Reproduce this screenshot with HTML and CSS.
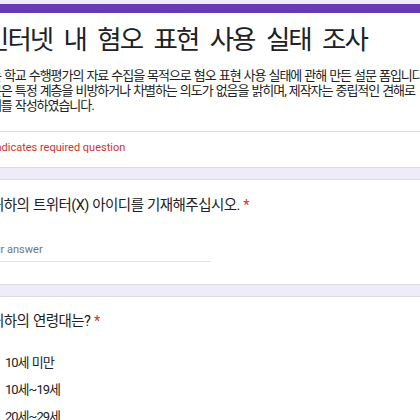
FILE: index.html
```html
<!DOCTYPE html>
<html lang="ko">
<head>
  <meta charset="UTF-8">
  <meta name="viewport" content="width=device-width, initial-scale=1">
  <title>인터넷 내 혐오 표현 사용 실태 조사</title>
  <link rel="stylesheet" href="styles.css">
</head>
<body>

<div class="form-page">

    <div class="card card-header">
        <div class="header-main">
            <h1 class="form-title">인터넷 내 혐오 표현 사용 실태 조사</h1>
            <p class="form-desc">이는 학교 수행평가의 자료 수집을 목적으로 혐오 표현 사용 실태에 관해 만든 설문 폼입니다.<br>설문은 특정 계층을 비방하거나 차별하는 의도가 없음을 밝히며, 제작자는 중립적인 견해로<br>문제를 작성하였습니다.</p>
        </div>
        <div class="required-note">* Indicates required question</div>
    </div>

    <div class="card question">
        <div class="q-title">귀하의 트위터(X) 아이디를 기재해주십시오. <span class="star">*</span></div>
        <div class="text-answer">Your answer</div>
    </div>

    <div class="card question">
        <div class="q-title">귀하의 연령대는? <span class="star">*</span></div>
        <div class="options">
            <div class="option"><span class="radio"></span>10세 미만</div>
            <div class="option"><span class="radio"></span>10세~19세</div>
            <div class="option"><span class="radio"></span>20세~29세</div>
            <div class="option"><span class="radio"></span>30세~39세</div>
        </div>
    </div>

</div>

</body>
</html>
```

FILE: styles.css
```css
:root {
    --bg-color: #f0ebf8;
    --accent: #673ab7;
    --border: #dadce0;
    --text: #202124;
    --muted: #70757a;
    --red: #d93025;
}

* {
    margin: 0;
    padding: 0;
    box-sizing: border-box;
}

body {
    font-family: Roboto, "Noto Sans CJK KR", sans-serif;
    background: var(--bg-color);
    color: var(--text);
    overflow: hidden;
}

.form-page {
    width: 560px;
    margin-left: -40px;
    padding-top: 4px;
}

.card {
    background: #fff;
    border: 1px solid var(--border);
    border-radius: 8px;
    margin-bottom: 11px;
    padding-left: 24px;
}

.card-header {
    border-top: 9px solid var(--accent);
    padding-left: 0;
}

.header-main {
    padding: 9px 0 18px 24px;
    border-bottom: 1px solid var(--border);
}

.form-title {
    font-family: "Noto Sans CJK KR", sans-serif;
    font-weight: 400;
    font-size: 26.5px;
    line-height: 31px;
    letter-spacing: -2px;
    word-spacing: 6px;
}

.form-desc {
    font-size: 13px;
    line-height: 15px;
    letter-spacing: -1.05px;
    word-spacing: 0.9px;
    white-space: nowrap;
    margin-top: 15px;
    margin-left: -6px;
}

.required-note {
    color: var(--red);
    font-size: 11px;
    line-height: 16px;
    padding: 8px 0 11px 24px;
}

.question {
    padding-top: 16px;
    padding-bottom: 22px;
}

.question + .question {
    padding-top: 15px;
}

.q-title {
    font-size: 14.5px;
    line-height: 20px;
    letter-spacing: -0.55px;
    word-spacing: 0.5px;
    margin-left: 6px;
}

.star {
    color: var(--red);
}

.text-answer {
    width: 229px;
    margin-top: 26px;
    margin-left: -3px;
    padding-bottom: 3px;
    font-size: 11px;
    line-height: 16px;
    color: var(--muted);
    border-bottom: 1px solid #e3e3e3;
}

.options {
    margin-top: 16px;
}

.option {
    display: flex;
    align-items: center;
    gap: 6px;
    height: 27px;
    font-size: 13px;
    letter-spacing: -1px;
    word-spacing: 1px;
}

.radio {
    width: 14px;
    height: 14px;
    border: 2px solid #5f6368;
    border-radius: 50%;
}
```
